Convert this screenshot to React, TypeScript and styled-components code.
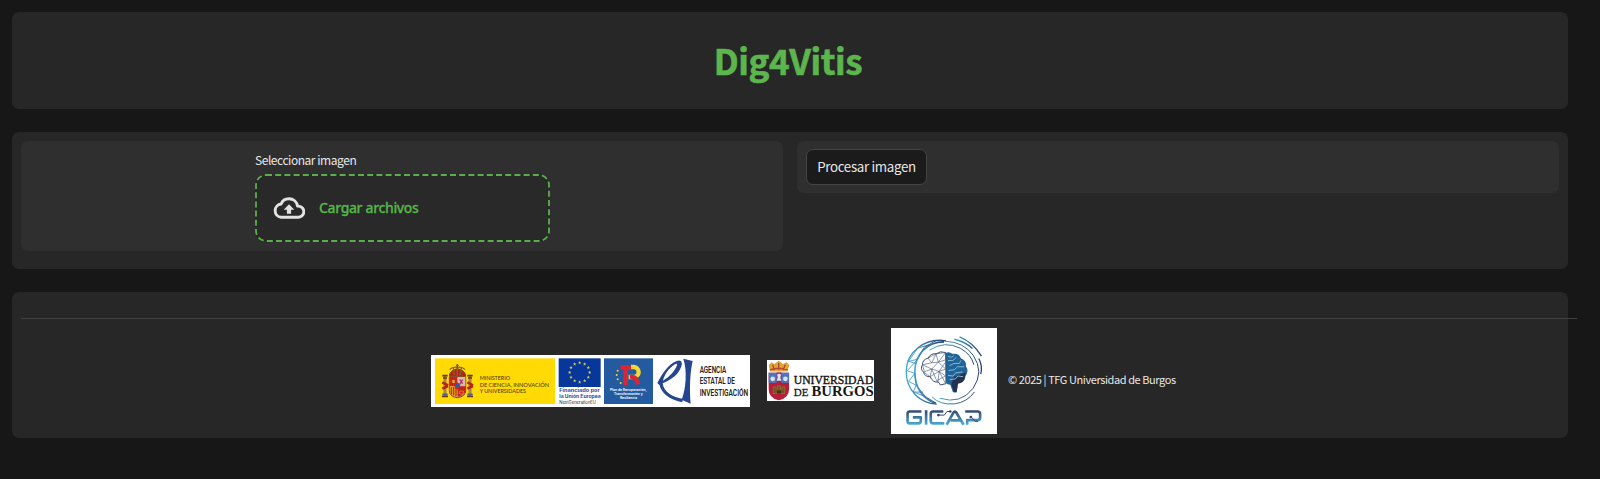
import React from 'react';
import styled, { createGlobalStyle } from 'styled-components';

const sans = '"Noto Sans CJK JP", "Noto Sans", sans-serif';

const GlobalStyle = createGlobalStyle`
  * { box-sizing: border-box; }
  body {
    margin: 0;
    background: #171717;
    color: #e8e8e8;
    font-family: ${sans};
    overflow: hidden;
  }
`;

const Page = styled.div`
  display: flex;
  flex-direction: column;
  gap: 23px;
  width: 1568px;
  height: 479px;
  padding: 12px 0 0 12px;
`;

const Panel = styled.section<{ $height: number }>`
  height: ${(p) => p.$height}px;
  border-radius: 7px;
  background: #272727;
`;

const Header = styled(Panel)`
  display: flex;
  align-items: center;
  justify-content: center;
`;

const Title = styled.h1`
  margin: -1px 0 0 -4px;
  color: #5cb54d;
  font-size: 35px;
  font-weight: 700;
  letter-spacing: -0.4px;
  line-height: 50px;
  -webkit-text-stroke: 0.6px #5cb54d;
`;

const Workspace = styled(Panel)`
  display: grid;
  grid-template-columns: 762px 762px;
  gap: 14px;
  align-items: start;
  padding: 9px;
`;

const Column = styled.div<{ $height: number }>`
  height: ${(p) => p.$height}px;
  border-radius: 7px;
  background: #2f2f2f;
`;

const UploadColumn = styled(Column)`
  padding: 11px 0 0 234px;
`;

const ActionColumn = styled(Column)`
  padding: 8px 9px;
`;

const Label = styled.div`
  height: 22px;
  font-size: 12px;
  letter-spacing: -0.46px;
  line-height: 15px;
`;

const DropZone = styled.div`
  position: relative;
  display: flex;
  align-items: center;
  gap: 14px;
  width: 295px;
  height: 68px;
  padding: 0 0 1px 18px;
  border-radius: 10px;
  background: #292929;
  color: #56b548;
  font-family: "Noto Sans", sans-serif;
  font-size: 14px;
  font-weight: 500;
  letter-spacing: -0.35px;
  -webkit-text-stroke: 0.3px #56b548;
`;

const DashedOutline = styled.svg`
  position: absolute;
  inset: 0;
`;

const ProcessButton = styled.button`
  display: block;
  width: 121px;
  height: 36px;
  padding: 0 0 1px;
  border: 1px solid #444;
  border-radius: 7px;
  background: #1b1b1b;
  color: #e8e8e8;
  font-family: ${sans};
  font-size: 13.3px;
  letter-spacing: -0.32px;
  line-height: 20px;
  white-space: nowrap;
`;

const Footer = styled(Panel)`
  padding: 26px 0 0 9px;
`;

const Divider = styled.hr`
  width: 1556px;
  height: 1px;
  margin: 0 0 9px;
  border: 0;
  background: #414141;
`;

const Credits = styled.div`
  display: flex;
  align-items: center;
  gap: 17px;
  height: 106px;
  padding-left: 410px;
`;

const Logo = styled.svg`
  flex: none;
  background: #fff;
`;

const SmallLogo = styled(Logo)`
  margin-top: -1px;
`;

const Copyright = styled.span`
  margin: -4px 0 0 -6px;
  font-size: 11px;
  letter-spacing: -0.42px;
  white-space: nowrap;
`;

type TProps = React.SVGProps<SVGTextElement> & { w: number };

const FitText = ({ w, children, ...rest }: TProps) => (
  <text textLength={w} lengthAdjust="spacingAndGlyphs" {...rest}>
    {children}
  </text>
);

const CloudIcon = () => (
  <svg width="32" height="22" viewBox="0 0 32 22">
    <path
      d="M8 20.3h16.8a5.6 5.6 0 0 0 .8-11.2h-1.1C23.900 4.700 20.400 1.700 16 1.700c-3.700 0-6.700 2-7.900 5.300A6.700 6.700 0 0 0 8 20.300z"
      fill="none"
      stroke="#e2e2e2"
      strokeWidth="2.900"
      strokeLinejoin="round"
    />
    <path d="M16 7.300l5.300 5.500h-3.200v4h-4.200v-4h-3.200z" fill="#e2e2e2" />
  </svg>
);

const euStars = Array.from({ length: 12 }, (_, i) => {
  const a = (i * Math.PI) / 6;
  return [446 + 30 * Math.sin(a), 52 - 29 * Math.cos(a)];
});

const MinistryLogo = () => (
  <Logo width="319" height="52" viewBox="0 0 957 156">
    <rect x="12" y="10" width="360" height="137" fill="#ffda05" />
    <g>
      <path d="M55 63q1-17 24-22 24 5 25 22z" fill="#b52220" stroke="#6b4b18" strokeWidth="3" />
      <path d="M56 44q9-10 23-7 14-3 23 7M79 30v33M67 38l3 22M91 38l-3 22" fill="none" stroke="#8a6220" strokeWidth="4" />
      <path d="M79 27v11M75 31h8" stroke="#6b4b18" strokeWidth="3" />
      <path d="M55 65h49v41q0 19-25 22-24-3-24-22z" fill="#d9a09a" stroke="#8a3c28" strokeWidth="3" />
      <path d="M56 66h23v27H56z" fill="#cf2020" />
      <path d="M80 66h23v27H80z" fill="#d9b7b0" />
      <path d="M56 94h23v31q-23-5-23-20z" fill="#e89c18" />
      <path d="M80 94h23v12q0 15-23 19z" fill="#c4221c" />
      <path d="M62 86V73h11v13zM61 97v20M68 96v25M75 96v27" fill="#d8a32b" stroke="#b51f1c" strokeWidth="3" />
      <path d="M86 88l9-14M86 74l9 12" stroke="#a83766" strokeWidth="4" />
      <ellipse cx="79" cy="93" rx="7" ry="9" fill="#3957a0" stroke="#c32626" strokeWidth="3" />
      <path d="M86 108h11v9H86z" fill="none" stroke="#ddaa27" strokeWidth="2" />
      {[42, 117].map((x) => (
        <g key={x}>
          <path d={`M${x} 62v61`} stroke="#a8844f" strokeWidth="9" />
          <path d={`M${x - 8} 62h16M${x - 6} 69h12M${x - 9} 124h18`} stroke="#6b3a18" strokeWidth="5" />
          <path d={`M${x - 8} 82l17 9M${x - 8} 101l17-8`} stroke="#b62320" strokeWidth="8" />
          <path d={`M${x - 8} 118h16`} stroke="#4b6590" strokeWidth="5" />
        </g>
      ))}
    </g>
    <g fill="#4c4219" fontFamily="Lato, sans-serif" fontSize="17" fontWeight="500">
      <FitText x="146" y="76" w={91}>MINISTERIO</FitText>
      <FitText x="146" y="95" w={208}>DE CIENCIA, INNOVACIÓN</FitText>
      <FitText x="146" y="113" w={139}>Y UNIVERSIDADES</FitText>
    </g>
    <rect x="383" y="10" width="126" height="86" fill="#07379b" />
    {euStars.map(([x, y], i) => (
      <path
        key={i}
        transform={`translate(${x} ${y})`}
        d="M0-5l1.500 3.500H5L2.200 1 3.200 5 0 2.600-3.200 5-2.200 1-5-1.500h3.500z"
        fill="#d5cf57"
      />
    ))}
    <g fontFamily="Inter, sans-serif" fontSize="14" fontWeight="700" fill="#2749a0">
      <FitText x="385" y="111" w={121}>Financiado por</FitText>
      <FitText x="385" y="128" w={124}>la Unión Europea</FitText>
      <FitText x="385" y="146" w={110} fontSize="13" fontWeight="400" fill="#222">NextGenerationEU</FitText>
    </g>
    <rect x="519" y="10" width="147" height="137" fill="#245a9f" />
    <path d="M568 38h34M584 32v58" fill="none" stroke="#d92637" strokeWidth="14" />
    <path d="M600 36h8a15 15 0 0 1 0 30h-15" fill="none" stroke="#f3d735" strokeWidth="13" />
    <path d="M597 66q20-3 24 22" fill="none" stroke="#d92637" strokeWidth="13" />
    <g fill="#f3d735">
      <circle cx="560" cy="47" r="3" /><circle cx="557" cy="60" r="3" />
      <circle cx="560" cy="73" r="3" /><circle cx="569" cy="84" r="3" />
    </g>
    <g fill="#eef3fb" fontFamily="Inter, sans-serif" fontSize="10" fontWeight="700">
      <FitText x="537" y="109" w={110}>Plan de Recuperación,</FitText>
      <FitText x="549" y="120" w={86}>Transformación y</FitText>
      <FitText x="567" y="131" w={51}>Resiliencia</FitText>
    </g>
    <path
      d="M679 84C694 55 711 29 737 18 751 12 756 23 750 37 741 61 719 75 695 85 698 109 720 126 757 132L753 142C715 134 690 113 686 91zM696 77C716 66 731 48 738 31 740 26 736 25 732 28 714 39 701 57 696 77z"
      fill="#25458f"
      fillRule="evenodd"
    />
    <path d="M757 11l28 7c-8 33-10 85-6 128l-27-12c13-33 17-86 5-123z" fill="#25458f" />
    <g fontFamily="Roboto, sans-serif" fontWeight="600" fontSize="27" fill="#222">
      <text transform="translate(806 53) scale(.7 1.05)">AGENCIA</text>
      <text transform="translate(806 88) scale(.7 1.05)">ESTATAL DE</text>
      <text transform="translate(806 122) scale(.73 1.05)">INVESTIGACIÓN</text>
    </g>
  </Logo>
);

const BurgosLogo = () => (
  <SmallLogo width="107" height="41" viewBox="0 0 320 122" preserveAspectRatio="none">
    <path d="M9 34L5 15l9-8 8 5 13-10 13 10 10-5 9 8-6 19z" fill="#dca43b" />
    <path d="M9 29q28-9 53 0M17 14l5 16M35 9v20M54 14l-5 16" fill="none" stroke="#b74633" strokeWidth="4" />
    <path d="M5 38h61v48q0 27-31 34Q5 113 5 86z" fill="#b71d38" />
    <path d="M5 38h61v30H5z" fill="#4e75bd" />
    <path d="M29 37h14v32H29z" fill="#a72045" />
    <g fill="#d8e4ed">
      <circle cx="17" cy="56" r="7" /><circle cx="55" cy="56" r="7" />
      <path d="M30 43l6-3 6 3-2 9 3 10h-14l3-10z" />
    </g>
    <path d="M19 100V80h8v6h5v-9h8v9h5v-6h8v20z" fill="#6e5426" stroke="#8f6a2e" strokeWidth="3" />
    <path d="M30 100v-9h12v9" fill="#50291c" />
    <g fontFamily='"Liberation Serif", serif' fill="#171717">
      <FitText x="80" y="72" w={238} fontSize="35" stroke="#171717" strokeWidth="1.2">UNIVERSIDAD</FitText>
      <FitText x="80" y="108" w={44} fontSize="33" stroke="#171717" strokeWidth="0.8">DE</FitText>
      <FitText x="133" y="108" w={186} fontSize="42" fontWeight="700">BURGOS</FitText>
    </g>
  </SmallLogo>
);

const GicapLogo = () => (
  <Logo width="106" height="106" viewBox="0 0 320 320">
    <defs>
      <linearGradient id="ring" x1="0" x2="1">
        <stop offset="0" stopColor="#42a9d5" />
        <stop offset="1" stopColor="#28436f" />
      </linearGradient>
      <linearGradient id="word" gradientUnits="userSpaceOnUse" x1="0" x2="0" y1="248" y2="294">
        <stop offset="0" stopColor="#34456f" />
        <stop offset="1" stopColor="#4bb1dc" />
      </linearGradient>
    </defs>
    <g fill="none" stroke="url(#ring)">
      <path d="M166 39C105 28 47 71 46 130c-1 60 43 97 92 100" strokeWidth="4" />
      <path d="M160 42C108 42 72 80 72 132c0 51 27 82 63 96" strokeWidth="5" />
      <path d="M138 37l-38 21-19 36-28 7 27-40 37-11M81 94l-32 35 23 8-19 24 23 12-9 20 30 1M75 107L48 99M72 137l4 36 28 34-37-14M104 207l32 20" strokeWidth="2.500" />
      <path d="M164 40q55 2 84 42 34 50 0 100-38 50-101 30" strokeWidth="3" />
      <path d="M124 208q24 25 68 21 38-5 60-36" strokeWidth="3" />
      <path d="M116 67q46-30 93-6 34 19 41 50" strokeWidth="3" />
      <path d="M191 34q33 7 55 28M207 27q40 16 66 58M265 92q12 22 6 47" strokeWidth="4" />
    </g>
    <path d="M164 77q10-8 21 1 20-3 26 13 18 8 15 24 11 17-2 30-4 20-22 22-1 15-5 28l-10-1-8-23q-14 1-15-14z" fill="#1f659a" />
    <path d="M190 148l35-14-1 16q-4 16-22 18l-4 26-8-1-8-23z" fill="#26304f" />
    <path d="M165 74q-16-6-29 4-16-2-24 13-17 4-17 20-8 12 3 22 4 15 20 14 9 19 25 16l6 9 17-4z" fill="#fff" stroke="#3a4b70" strokeWidth="3" />
    <path d="M136 78l-13 27-28 6 28 13 15 35 4 5 3-33 20-7-22-21-20 2-11-14 24-13 29-4-22 29 22-7M95 112l6 20 22-8 22 7 19-27M98 133l20 14 5-23 20-21-7-25M118 147l27-16 20 37M138 159l27-14-20-14" fill="none" stroke="#536481" strokeWidth="2" />
    <path d="M172 85q13 7 17-2M172 98h15l10-9M176 114l14-7h16l5-9M174 128l17-2 10-9h20M172 143l15 2 9-10 20-2M177 156l17-2 8-9 16 2" fill="none" stroke="#86b5d1" strokeWidth="3" />
    <g fill="none" stroke="url(#word)" strokeWidth="8" strokeLinejoin="round">
      <path d="M92 252H56q-6 0-6 7v22q0 7 6 7h27q7 0 7-7v-11H66" />
      <path d="M106 248v44M158 252h-31q-7 0-7 7v22q0 7 7 7h34" />
      <path d="M168 292l21-37q4-6 8 0l22 37M180 279h29" />
      <path d="M224 252h37q8 0 8 7v12q0 7-8 7h-31v14" />
    </g>
    <path d="M145 263h16l8-11h9M244 270l10 12h9" fill="none" stroke="#34456f" strokeWidth="3" />
    <g fill="#34456f"><circle cx="143" cy="263" r="4" /><circle cx="179" cy="252" r="4" /><circle cx="241" cy="269" r="4" /></g>
  </Logo>
);

export default function App() {
  return (
    <>
      <GlobalStyle />
      <Page>
        <Header as="header" $height={97}>
          <Title>Dig4Vitis</Title>
        </Header>
        <Workspace as="main" $height={137}>
          <UploadColumn $height={110}>
            <Label>Seleccionar imagen</Label>
            <DropZone>
              <DashedOutline width="295" height="68">
                <rect x="1" y="1" width="293" height="66" rx="10" fill="none" stroke="#5bad4c" strokeWidth="1.800" strokeDasharray="6 3.200" />
              </DashedOutline>
              <CloudIcon />
              <span>Cargar archivos</span>
            </DropZone>
          </UploadColumn>
          <ActionColumn $height={52}>
            <ProcessButton>Procesar imagen</ProcessButton>
          </ActionColumn>
        </Workspace>
        <Footer as="footer" $height={146}>
          <Divider />
          <Credits>
            <MinistryLogo />
            <BurgosLogo />
            <GicapLogo />
            <Copyright>© 2025 | TFG Universidad de Burgos</Copyright>
          </Credits>
        </Footer>
      </Page>
    </>
  );
}
